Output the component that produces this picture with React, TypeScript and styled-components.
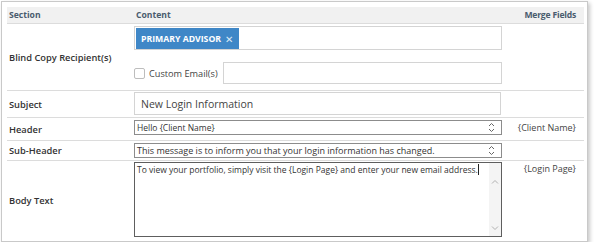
import React from "react"
import styled, { createGlobalStyle } from "styled-components"

const GlobalStyle = createGlobalStyle`
  *, *::before, *::after { box-sizing: border-box; }
  body {
    margin: 0;
    background: #fff;
    font-family: "Open Sans", "Noto Sans", sans-serif;
    color: #333;
  }
`

// layout
const Panel = styled.div`
  margin: 1px 0 0 1px;
  width: 587px;
  height: 241px;
  border: 1px solid #c9c9c9;
  box-shadow: 2px 2px 4px rgba(0, 0, 0, 0.22);
  padding: 5px 3px 0 5px;
  background: #fff;
`

const Row = styled.div<{ $h: number; $line?: boolean }>`
  display: grid;
  grid-template-columns: 127px 375px 1fr;
  height: ${p => p.$h}px;
  border-bottom: ${p => (p.$line ? "1px solid #dcdcdc" : "none")};
  white-space: nowrap;
`

const HeadRow = styled(Row)`
  background: #f1f1f1;
  align-items: center;
  font-size: 8.6px;
  font-weight: 700;
  color: #4a5c6e;
`

const HeadCell = styled.div<{ $right?: boolean }>`
  padding: ${p => (p.$right ? "0 8px 0 0" : "0 0 0 2px")};
  text-align: ${p => (p.$right ? "right" : "left")};
  letter-spacing: ${p => (p.$right ? "-0.2px" : "0")};
`

const Label = styled.div`
  display: flex;
  align-items: center;
  padding-left: 2px;
  font-size: 9.3px;
  font-weight: 600;
  color: #333;
`

const Cell = styled.div<{ $top?: number }>`
  display: flex;
  flex-direction: column;
  padding-top: ${p => p.$top ?? 0}px;
  min-width: 0;
`

const Merge = styled.div<{ $top?: number }>`
  font-size: 9px;
  color: #444;
  text-align: right;
  padding-right: 8px;
  padding-top: ${p => p.$top ?? 0}px;
`

// inputs
const TagBox = styled.div`
  width: 368px;
  height: 24px;
  border: 1px solid #d4d4d4;
  padding: 1px;
  display: flex;
`

const Tag = styled.span`
  background: #3f87c7;
  color: #fff;
  font-size: 8.7px;
  font-weight: 700;
  display: flex;
  align-items: center;
  gap: 4px;
  padding: 0 6px 0 5px;
  height: 21px;
`

const TagX = styled.span`
  font-weight: 400;
  font-size: 10px;
  color: #dce9f5;
`

const EmailRow = styled.div`
  display: flex;
  align-items: center;
  margin-top: 12px;
  height: 22px;
`

const Check = styled.span`
  width: 11px;
  height: 11px;
  border: 1px solid #bdbdbd;
  border-radius: 2px;
  margin-right: 4px;
`

const CheckText = styled.span`
  font-size: 9.2px;
  color: #444;
  margin-right: 5px;
`

const EmailInput = styled.div`
  width: 279px;
  height: 22px;
  border: 1px solid #d4d4d4;
`

const SubjectInput = styled.div`
  width: 367px;
  height: 23px;
  border: 1px solid #d4d4d4;
  font-size: 10.5px;
  color: #444;
  display: flex;
  align-items: center;
  padding-left: 6px;
`

const SpinInput = styled.div<{ $size: number }>`
  width: 368px;
  height: 15px;
  border: 1px solid #8c8c8c;
  font-size: ${p => p.$size}px;
  color: #333;
  display: flex;
  align-items: center;
  justify-content: space-between;
  padding: 0 6px 0 2px;
`

const TextArea = styled.div`
  width: 368px;
  height: 75px;
  border: 1px solid #5e5e5e;
  display: flex;
`

const AreaText = styled.div`
  flex: 1;
  min-width: 0;
  overflow: hidden;
  font-size: 8.5px;
  color: #333;
  padding: 1px 2px;
`

const Caret = styled.span`
  display: inline-block;
  width: 1px;
  height: 11px;
  background: #222;
  vertical-align: -2px;
`

const ScrollBar = styled.div`
  width: 12px;
  background: #f4f4f4;
  display: flex;
  flex-direction: column;
  justify-content: space-between;
  align-items: center;
  padding: 16px 0 5px;
`

const Chevron = ({ up }: { up?: boolean }) => (
  <svg width="8" height="5" viewBox="0 0 8 5">
    <path d={up ? "M1 4.5 L4 1.5 L7 4.5" : "M1 0.5 L4 3.5 L7 0.5"} fill="none" stroke="#b0b0b0" strokeWidth="1" />
  </svg>
)

const Spinner = () => (
  <svg width="7" height="11" viewBox="0 0 7 11">
    <path d="M1 4 L3.5 1.5 L6 4" fill="none" stroke="#666" strokeWidth="1" />
    <path d="M1 7 L3.5 9.5 L6 7" fill="none" stroke="#666" strokeWidth="1" />
  </svg>
)

export default function App() {
  return (
    <>
      <GlobalStyle />
      <Panel>
        <HeadRow $h={17} $line>
          <HeadCell>Section</HeadCell>
          <HeadCell>Content</HeadCell>
          <HeadCell $right>Merge Fields</HeadCell>
        </HeadRow>

        <Row $h={67} $line>
          <Label>Blind Copy Recipient(s)</Label>
          <Cell $top={2}>
            <TagBox>
              <Tag>
                PRIMARY ADVISOR <TagX>✕</TagX>
              </Tag>
            </TagBox>
            <EmailRow>
              <Check />
              <CheckText>Custom Email(s)</CheckText>
              <EmailInput />
            </EmailRow>
          </Cell>
          <Merge />
        </Row>

        <Row $h={27} $line>
          <Label>Subject</Label>
          <Cell $top={1}>
            <SubjectInput>New Login Information</SubjectInput>
          </Cell>
          <Merge />
        </Row>

        <Row $h={23} $line>
          <Label>Header</Label>
          <Cell $top={2}>
            <SpinInput $size={8.5}>
              Hello {"{Client Name}"}
              <Spinner />
            </SpinInput>
          </Cell>
          <Merge $top={3}>{"{Client Name}"}</Merge>
        </Row>

        <Row $h={20} $line>
          <Label>Sub-Header</Label>
          <Cell $top={2}>
            <SpinInput $size={9}>
              This message is to inform you that your login information has changed.
              <Spinner />
            </SpinInput>
          </Cell>
          <Merge />
        </Row>

        <Row $h={79}>
          <Label>Body Text</Label>
          <Cell $top={1}>
            <TextArea>
              <AreaText>
                To view your portfolio, simply visit the {"{Login Page}"} and enter your new email address.
                <Caret />
              </AreaText>
              <ScrollBar>
                <Chevron up />
                <Chevron />
              </ScrollBar>
            </TextArea>
          </Cell>
          <Merge $top={1}>{"{Login Page}"}</Merge>
        </Row>
      </Panel>
    </>
  )
}
